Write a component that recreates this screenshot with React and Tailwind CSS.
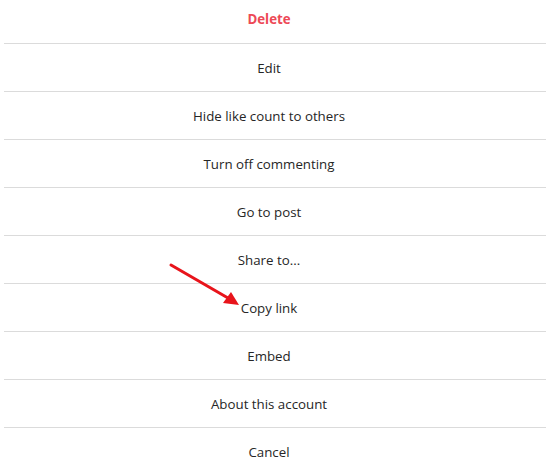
import React from "react";

const items = [
  "Edit",
  "Hide like count to others",
  "Turn off commenting",
  "Go to post",
  "Share to...",
  "Copy link",
  "Embed",
  "About this account",
  "Cancel",
];

export default function App() {
  return (
    <div className="relative w-[550px] h-[471px] overflow-hidden bg-white font-['Segoe_UI','Open_Sans',sans-serif] text-[13.3px] text-[#262626]">
      <div className="mx-1 flex flex-col">
        <button className="h-11 pb-1 pr-3 border-b border-[#dbdbdb] flex items-center justify-center font-bold text-[#ed4956]">
          Delete
        </button>
        {items.map((label) => (
          <button
            key={label}
            className="h-12 shrink-0 pt-[2px] pr-3 border-b border-[#dbdbdb] flex items-center justify-center"
          >
            {label}
          </button>
        ))}
      </div>

      {/* annotation arrow */}
      <svg
        className="absolute left-0 top-0 pointer-events-none"
        width="550"
        height="471"
      >
        <line x1="171" y1="265" x2="228" y2="298" stroke="#e8141b" strokeWidth="3" strokeLinecap="round" />
        <polygon points="239,305 223,303 231,292" fill="#e8141b" />
      </svg>
    </div>
  );
}
